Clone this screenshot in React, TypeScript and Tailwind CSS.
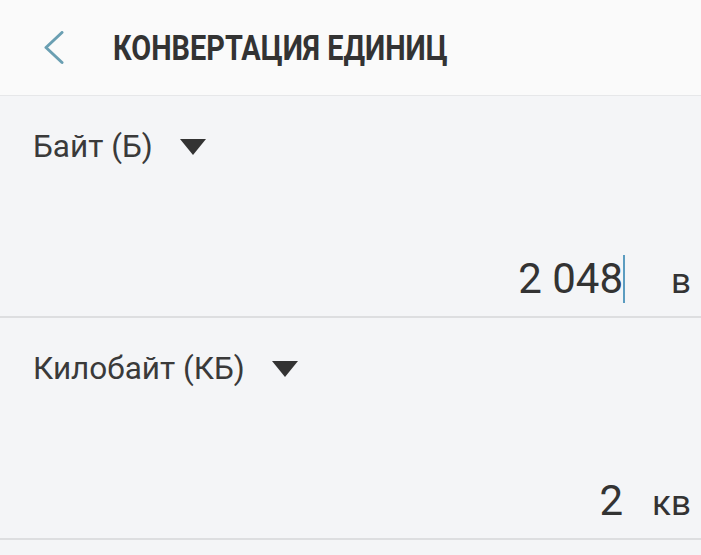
import React from "react";

function Caret() {
  return (
    <svg width="26" height="16" viewBox="0 0 26 16" className="ml-[27px] shrink-0">
      <polygon points="0,0 26,0 13,16" fill="#333333" />
    </svg>
  );
}

function Section({ label, value, unit, cursor }: { label: string; value: string; unit: string; cursor?: boolean }) {
  return (
    <div className="h-[222px] border-b-2 border-[#dddee0] flex flex-col">
      <div className="flex items-center pl-[33px] pt-[35px]">
        <span className="text-[31.5px] leading-none text-[#3a3a3a]">{label}</span>
        <Caret />
      </div>
      <div className="flex items-baseline justify-end mt-[95px] pr-[10px]">
        <span className="relative inline-block text-[42px] leading-none text-[#333333]">
          {value}
          {cursor && <span className="absolute right-[-2px] top-[-3px] h-[48px] w-[2px] bg-[#5b9cc0]" />}
        </span>
        <span className="w-[68px] text-right text-[35px] leading-none text-[#333333]">{unit}</span>
      </div>
    </div>
  );
}

export default function App() {
  return (
    <div className="w-[701px] h-[555px] overflow-hidden bg-[#f4f5f7]" style={{ fontFamily: "Roboto, 'Noto Sans', sans-serif" }}>
      <div className="h-[96px] bg-[#fafafa] border-b border-[#e6e7e9] flex items-center">
        <svg width="22" height="34" viewBox="0 0 22 34" className="ml-[43px] shrink-0">
          <polyline points="19,1.5 3,16.5 19,31.5" fill="none" stroke="#6a9fb2" strokeWidth="3" strokeLinecap="round" strokeLinejoin="round" />
        </svg>
        <span className="ml-[48px] inline-block origin-left scale-x-[0.85] scale-y-[1.04] text-[34px] font-bold leading-none text-[#333333] whitespace-nowrap">
          КОНВЕРТАЦИЯ ЕДИНИЦ
        </span>
      </div>
      <Section label="Байт (Б)" value="2 048" unit="в" cursor />
      <Section label="Килобайт (КБ)" value="2" unit="кв" />
    </div>
  );
}
